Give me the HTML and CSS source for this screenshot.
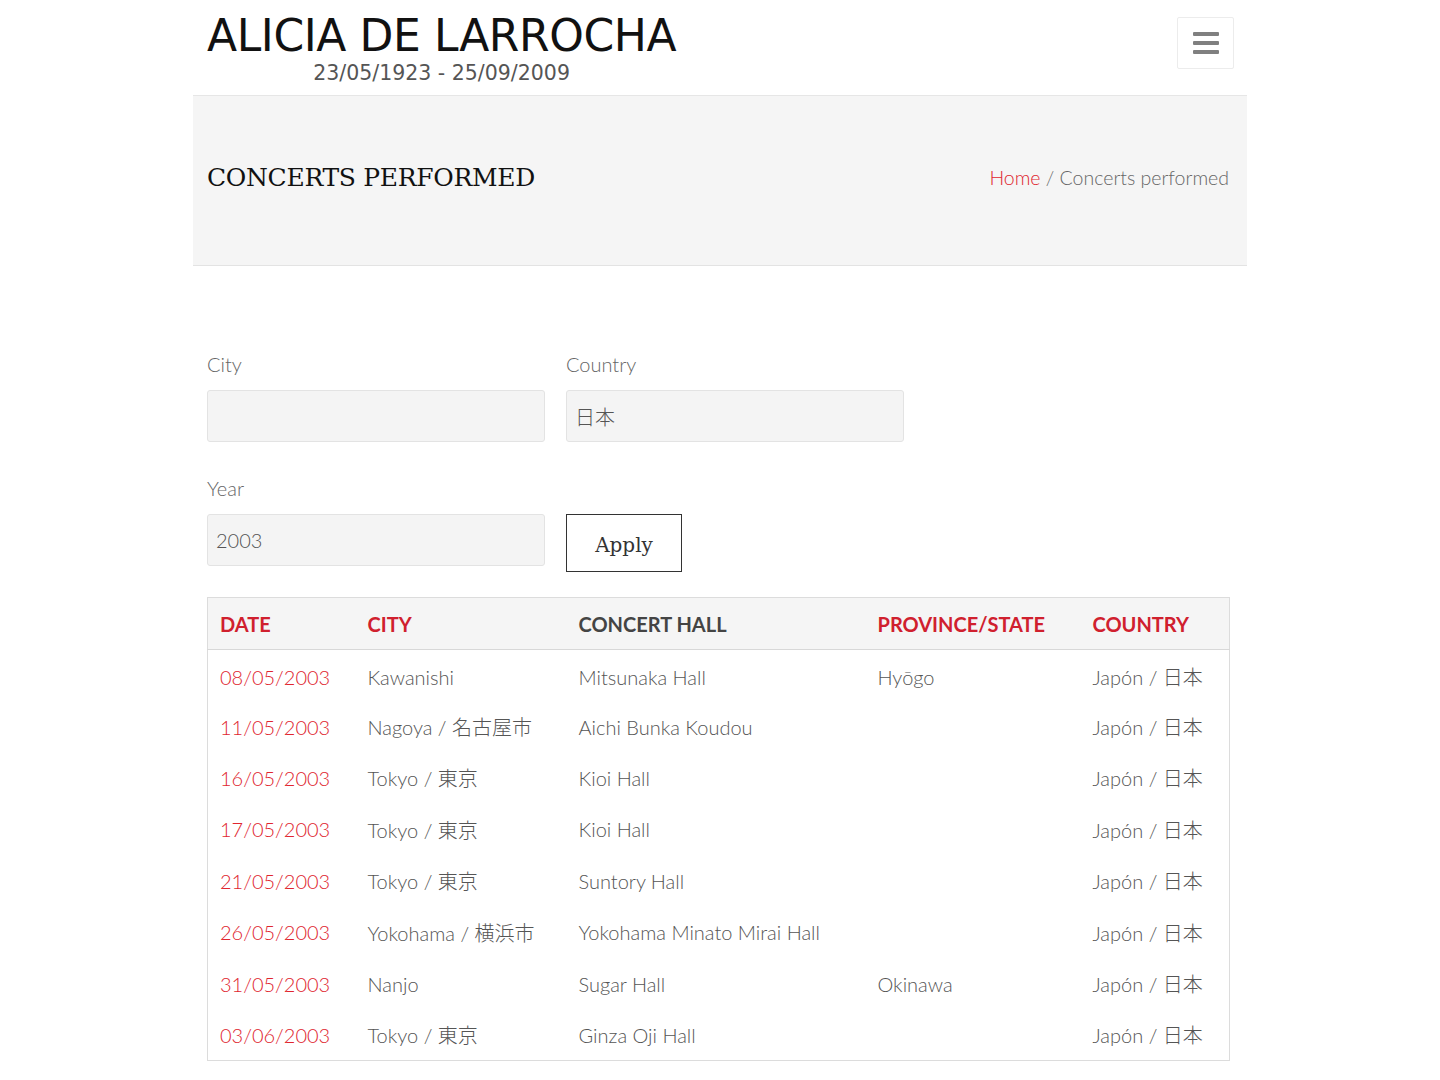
FILE: index.html
```html
<!DOCTYPE html>
<html lang="es">
<head>
<meta charset="utf-8">
<title>Alicia de Larrocha - Concerts performed</title>
<link rel="stylesheet" href="styles.css">
</head>
<body>
<div class="page">
  <header class="site-header">
    <a class="logo" href="#">
      <span class="logo-name">ALICIA DE LARROCHA</span>
      <span class="logo-dates">23/05/1923 - 25/09/2009</span>
    </a>
    <button class="menu-btn" aria-label="Menu">
      <span></span><span></span><span></span>
    </button>
  </header>

  <section class="title-bar">
    <h1>CONCERTS PERFORMED</h1>
    <nav class="breadcrumb"><a href="#">Home</a> / Concerts performed</nav>
  </section>

  <main class="content">
    <form class="filters">
      <div class="filter-row">
        <div class="field">
          <label>City</label>
          <input type="text" value="">
        </div>
        <div class="field">
          <label>Country</label>
          <input type="text" value="日本">
        </div>
      </div>
      <div class="filter-row">
        <div class="field">
          <label>Year</label>
          <input type="text" value="2003">
        </div>
        <div class="field field-btn">
          <button type="button" class="apply">Apply</button>
        </div>
      </div>
    </form>

    <table class="concerts">
      <colgroup>
        <col class="c-date"><col class="c-city"><col class="c-hall"><col class="c-prov"><col class="c-country">
      </colgroup>
      <thead>
        <tr>
          <th class="sort">DATE</th>
          <th class="sort">CITY</th>
          <th>CONCERT HALL</th>
          <th class="sort">PROVINCE/STATE</th>
          <th class="sort">COUNTRY</th>
        </tr>
      </thead>
      <tbody>
        <tr><td class="date">08/05/2003</td><td>Kawanishi</td><td>Mitsunaka Hall</td><td>Hyōgo</td><td>Japón / 日本</td></tr>
        <tr><td class="date">11/05/2003</td><td>Nagoya / 名古屋市</td><td>Aichi Bunka Koudou</td><td></td><td>Japón / 日本</td></tr>
        <tr><td class="date">16/05/2003</td><td>Tokyo / 東京</td><td>Kioi Hall</td><td></td><td>Japón / 日本</td></tr>
        <tr><td class="date">17/05/2003</td><td>Tokyo / 東京</td><td>Kioi Hall</td><td></td><td>Japón / 日本</td></tr>
        <tr><td class="date">21/05/2003</td><td>Tokyo / 東京</td><td>Suntory Hall</td><td></td><td>Japón / 日本</td></tr>
        <tr><td class="date">26/05/2003</td><td>Yokohama / 横浜市</td><td>Yokohama Minato Mirai Hall</td><td></td><td>Japón / 日本</td></tr>
        <tr><td class="date">31/05/2003</td><td>Nanjo</td><td>Sugar Hall</td><td>Okinawa</td><td>Japón / 日本</td></tr>
        <tr><td class="date">03/06/2003</td><td>Tokyo / 東京</td><td>Ginza Oji Hall</td><td></td><td>Japón / 日本</td></tr>
      </tbody>
    </table>
  </main>
</div>
</body>
</html>
```
FILE: styles.css
```css
* { box-sizing: border-box; }

html, body {
  margin: 0;
  padding: 0;
  background: #ffffff;
}

body {
  font-family: Lato, "Noto Sans CJK JP", sans-serif;
  color: #555;
}

.page {
  width: 1054px;
  margin: 0 auto;
}

/* Header */
.site-header {
  height: 96px;
  display: flex;
  justify-content: space-between;
  align-items: flex-start;
  padding: 0 13px 0 14px;
  border-bottom: 1px solid #e6e6e6;
}

.logo {
  display: flex;
  flex-direction: column;
  align-items: center;
  text-decoration: none;
  padding-top: 13px;
}

.logo-name {
  font-family: "DejaVu Sans", Verdana, sans-serif;
  font-size: 44px;
  line-height: 46px;
  color: #111;
  letter-spacing: -0.4px;
}

.logo-dates {
  font-family: "DejaVu Sans", Verdana, sans-serif;
  font-size: 20.5px;
  line-height: 22px;
  color: #555;
  margin-top: 3px;
}

.menu-btn {
  margin-top: 17px;
  width: 57px;
  height: 52px;
  background: #fff;
  border: 1px solid #ececec;
  border-radius: 2px;
  display: flex;
  flex-direction: column;
  align-items: center;
  justify-content: center;
  gap: 5px;
  padding: 0;
}

.menu-btn span {
  display: block;
  width: 26px;
  height: 4px;
  background: #808080;
  border-radius: 1px;
}

/* Title bar */
.title-bar {
  background: #f5f5f5;
  height: 170px;
  border-bottom: 1px solid #e3e3e3;
  display: flex;
  align-items: center;
  justify-content: space-between;
  padding: 0 18px 6px 14px;
}

.title-bar h1 {
  margin: 0;
  font-family: "DejaVu Serif", "Liberation Serif", serif;
  font-weight: normal;
  font-size: 25px;
  color: #111;
  letter-spacing: -0.3px;
}

.breadcrumb {
  font-size: 19.5px;
  color: #666;
  font-weight: 300;
}

.breadcrumb a {
  color: #e0262f;
  text-decoration: none;
}

/* Content */
.content {
  padding: 86px 18px 40px 14px;
}

.filters {
  display: flex;
  flex-direction: column;
  gap: 34px;
  margin-bottom: 31px;
}

.filter-row {
  display: flex;
  gap: 21px;
  align-items: stretch;
}

.field {
  display: flex;
  flex-direction: column;
  width: 338px;
}

.field label {
  font-size: 20px;
  font-weight: 300;
  color: #666;
  line-height: 24px;
  margin-bottom: 14px;
}

.field input {
  height: 52px;
  border: 1px solid #e3e3e3;
  border-radius: 3px;
  background: #f4f4f4;
  font-family: Lato, "Noto Sans CJK JP", sans-serif;
  font-size: 20px;
  font-weight: 300;
  color: #555;
  padding: 0 8px;
}

.field-btn {
  justify-content: flex-end;
  width: auto;
}

.apply {
  width: 116px;
  height: 58px;
  background: #fff;
  border: 1px solid #333;
  font-family: "DejaVu Serif", "Liberation Serif", serif;
  font-size: 20px;
  color: #333;
  padding: 4px 0 0;
  margin-bottom: -6px;
}

/* Table */
.concerts {
  width: 1022px;
  border-collapse: collapse;
  border: 1px solid #dcdcdc;
  table-layout: fixed;
}

.c-date { width: 148px; }
.c-city { width: 211px; }
.c-hall { width: 299px; }
.c-prov { width: 215px; }
.c-country { width: 149px; }

.concerts th {
  background: #f5f5f5;
  height: 52px;
  text-align: left;
  font-size: 20px;
  font-weight: 700;
  color: #444;
  padding: 0 0 0 12px;
  border-bottom: 1px solid #d8d8d8;
}

.concerts th.sort { color: #d0202e; }

.concerts td {
  height: 51.4px;
  font-size: 20px;
  font-weight: 300;
  color: #555;
  padding: 0 0 0 12px;
  white-space: nowrap;
}

.concerts tbody tr:first-child td { padding-top: 3px; }

.concerts td.date { color: #e0262f; }
```
